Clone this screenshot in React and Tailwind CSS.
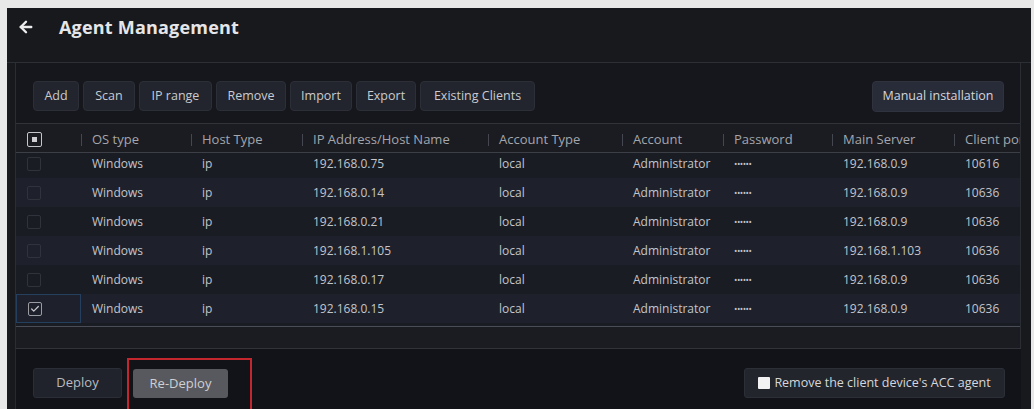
import React from 'react';
import { ArrowLeft, Check } from 'lucide-react';

// ── Data ──────────────────────────────────────────────────────────────────────

const TOOLBAR = [
    { label: 'Add', w: 'w-[46px]' },
    { label: 'Scan', w: 'w-[52px]' },
    { label: 'IP range', w: 'w-[73px]' },
    { label: 'Remove', w: 'w-[70px]' },
    { label: 'Import', w: 'w-[62px]' },
    { label: 'Export', w: 'w-[60px]' },
    { label: 'Existing Clients', w: 'w-[115px]' },
];

const COLUMNS = [
    { key: 'os', label: 'OS type', w: 'w-[110px]' },
    { key: 'host', label: 'Host Type', w: 'w-[111px]' },
    { key: 'ip', label: 'IP Address/Host Name', w: 'w-[186px]' },
    { key: 'accType', label: 'Account Type', w: 'w-[134px]' },
    { key: 'account', label: 'Account', w: 'w-[101px]' },
    { key: 'pwd', label: 'Password', w: 'w-[109px]' },
    { key: 'server', label: 'Main Server', w: 'w-[122px]' },
    { key: 'port', label: 'Client port', w: 'w-[90px]' },
];

const ROWS = [
    { ip: '192.168.0.75', server: '192.168.0.9', port: '10616' },
    { ip: '192.168.0.14', server: '192.168.0.9', port: '10636' },
    { ip: '192.168.0.21', server: '192.168.0.9', port: '10636' },
    { ip: '192.168.1.105', server: '192.168.1.103', port: '10636' },
    { ip: '192.168.0.17', server: '192.168.0.9', port: '10636' },
    { ip: '192.168.0.15', server: '192.168.0.9', port: '10636', checked: true },
].map(r => ({ os: 'Windows', host: 'ip', accType: 'local', account: 'Administrator', pwd: '••••••', ...r }));

// ── Pieces ────────────────────────────────────────────────────────────────────

const ToolButton = ({ label, w }) => (
    <button className={`${w} h-[30px] shrink-0 rounded-[4px] bg-[#22252d] border border-[#2c2f37] text-[12.5px] text-[#c9cbd0] font-medium`}>
        {label}
    </button>
);

const RowCheck = ({ checked }) => (
    <span className={`flex items-center justify-center w-[14px] h-[14px] rounded-[2px] border ${checked ? 'border-[#9a9ca2]' : 'border-[#30333b]'}`}>
        {checked && <Check className="w-[10px] h-[10px] text-[#c8c8cc]" strokeWidth={3} />}
    </span>
);

// ── App ───────────────────────────────────────────────────────────────────────

export default function App() {
    return (
        <div className="w-[1034px] h-[409px] overflow-hidden bg-[#e8e8e8] pl-[7px] pt-[8px] font-['Open_Sans','Liberation_Sans',sans-serif]">
            <div className="w-[1024px] h-[401px] bg-[#17191d] flex flex-col">

                {/* Title */}
                <div className="h-[55px] shrink-0 flex items-center pl-[10px] pb-[16px] border-b border-[#2c2f36]">
                    <ArrowLeft className="w-[18px] h-[18px] text-[#ececec]" strokeWidth={3.2} />
                    <h1 className="ml-[24px] text-[18px] font-bold text-[#e6e6e8] tracking-[0.2px]">Agent Management</h1>
                </div>

                {/* Main panel */}
                <div className="ml-[8px] mr-[10px] border-x border-[#2a2d34] bg-[#15171c] flex flex-col">
                    {/* Toolbar */}
                    <div className="h-[60px] flex items-start pt-[18px] pl-[17px] pr-[16px] gap-[4px]">
                        {TOOLBAR.map(b => <ToolButton key={b.label} {...b} />)}
                        <button className="ml-auto w-[132px] h-[31px] rounded-[4px] bg-[#282b38] border border-[#30333e] text-[12.5px] text-[#d4d6dc] font-medium">
                            Manual installation
                        </button>
                    </div>

                    {/* Table header */}
                    <div className="h-[30px] flex items-center pt-[3px] border-t border-[#30333a] border-b border-b-[#3c3f46] bg-[#1a1c22] text-[13px] text-[#a4a6ac] overflow-hidden">
                        <div className="w-[65px] shrink-0 pl-[11px] flex items-center">
                            <span className="flex items-center justify-center w-[15px] h-[15px] border-[1.5px] border-[#c6c6ca] rounded-[2px]">
                                <span className="w-[5px] h-[5px] bg-[#d0d0d4]" />
                            </span>
                        </div>
                        {COLUMNS.map(c => (
                            <div key={c.key} className={`${c.w} shrink-0 flex items-center whitespace-nowrap`}>
                                <span className="w-px h-[12px] bg-[#44474f]" />
                                <span className="ml-[10px]">{c.label}</span>
                            </div>
                        ))}
                    </div>

                    {/* Table body */}
                    <div className="h-[174px] overflow-hidden border-b border-[#4a4d55] bg-[#1a1c23]">
                        <div className="-mt-[4px]">
                            {ROWS.map((r, i) => (
                                <div
                                    key={i}
                                    className={`h-[29px] flex items-center text-[12px] text-[#c3c5cb] ${i % 2 ? 'bg-[#1e212b]' : 'bg-[#1a1c23]'}`}
                                >
                                    <div className={`w-[65px] h-full shrink-0 pl-[11px] flex items-center ${r.checked ? 'border border-[#25405e]' : ''}`}>
                                        <RowCheck checked={r.checked} />
                                    </div>
                                    {COLUMNS.map(c => (
                                        <div key={c.key} className={`${c.w} shrink-0 pl-[11px] whitespace-nowrap ${c.key === 'pwd' ? 'text-[9px] tracking-[-0.5px]' : ''}`}>
                                            {r[c.key]}
                                        </div>
                                    ))}
                                </div>
                            ))}
                        </div>
                    </div>

                    <div className="h-[21px] bg-[#1a1c22]" />
                </div>

                {/* Footer */}
                <div className="flex-1 border-t border-[#30333a] ml-[8px] mr-[10px] border-l border-l-[#262930] bg-[#111318] flex items-start pl-[17px] pr-[16px] pt-[9px]">
                    <button className="mt-[10px] w-[89px] h-[30px] rounded-[3px] bg-[#20232b] border border-[#2b2e36] text-[13px] text-[#b9bbc1] font-medium">
                        Deploy
                    </button>
                    <div className="ml-[5px] w-[125px] h-[56px] border-2 border-[#c3262d] pl-[4px] pt-[9px]">
                        <button className="w-[95px] h-[29px] rounded-[3px] bg-[#58595e] text-[13px] text-[#cfd0d4] font-medium">
                            Re-Deploy
                        </button>
                    </div>
                    <button className="ml-auto mt-[10px] w-[261px] h-[30px] rounded-[3px] bg-[#23252d] border border-[#2c2f37] flex items-center justify-center gap-[4px] text-[12.5px] text-[#d6d7db] font-medium">
                        <span className="w-[12px] h-[12px] bg-[#f2f2f2] rounded-[1px]" />
                        Remove the client device's ACC agent
                    </button>
                </div>
            </div>
        </div>
    );
}
